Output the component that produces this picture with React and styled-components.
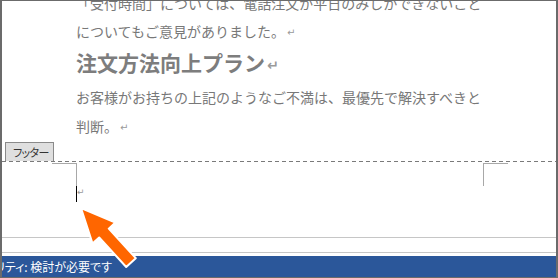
import React from 'react';
import styled, { createGlobalStyle } from 'styled-components';

const GlobalStyle = createGlobalStyle`
  html, body {
    margin: 0;
    padding: 0;
    background: #fff;
  }
  body {
    font-family: "Noto Sans CJK JP", "Noto Sans", sans-serif;
  }
`;

const Window = styled.div`
  position: relative;
  width: 558px;
  height: 278px;
  box-sizing: border-box;
  border-style: solid;
  border-color: #6b6b6b;
  border-width: 1px 2px 1px 2px;
  display: flex;
  flex-direction: column;
  overflow: hidden;
  background: #fff;
`;

const Document = styled.div`
  flex: 1;
  display: flex;
  flex-direction: column;
  overflow: hidden;
`;

const Body = styled.div`
  margin-top: -12px;
  padding-left: 74px;
  color: #787878;
  white-space: nowrap;
`;

const Line = styled.div`
  height: ${p => p.$lh || 28}px;
  font-size: 14px;
  line-height: ${p => p.$lh || 28}px;
  margin-top: ${p => p.$mt || 0}px;
`;

const Heading = styled.div`
  height: 34px;
  font-size: 21px;
  font-weight: 700;
  line-height: 34px;
  color: #7d7d7d;
`;

const Mark = styled.span`
  display: inline-block;
  font-family: "DejaVu Sans", sans-serif;
  font-size: ${p => p.$size || 10}px;
  line-height: 0;
  color: #9a9a9a;
  margin-left: ${p => p.$ml || 2}px;
  vertical-align: middle;
`;

const TabRow = styled.div`
  margin-top: 1px;
  padding-left: 3px;
  display: flex;
`;

const FooterTab = styled.div`
  width: 49px;
  height: 19px;
  box-sizing: border-box;
  border: 1px solid #8a8a8a;
  border-bottom: none;
  background: #dfdfdf;
  color: #333;
  font-size: 11px;
  letter-spacing: -0.6px;
  font-feature-settings: "palt";
  line-height: 18px;
  padding-left: 7px;
  white-space: nowrap;
  overflow: hidden;
`;

const Dashed = styled.div`
  height: 1px;
  flex-shrink: 0;
  background: repeating-linear-gradient(to right, #7a7a7a 0 4px, transparent 4px 7px);
`;

const MarkRow = styled.div`
  margin-top: 1px;
  padding: 0 48px 0 50px;
  display: flex;
  justify-content: space-between;
`;

const Corner = styled.div`
  width: 24px;
  height: 22px;
  border-top: 1px solid #a8a8a8;
  ${p => (p.$side === 'left' ? 'border-right' : 'border-left')}: 1px solid #a8a8a8;
`;

const CursorRow = styled.div`
  padding-left: 74px;
  display: flex;
  align-items: flex-start;
  height: 16px;
`;

const Caret = styled.div`
  width: 1px;
  height: 16px;
  background: #000;
`;

const CaretMark = styled.span`
  font-family: "DejaVu Sans", sans-serif;
  font-size: 9px;
  line-height: 10px;
  color: #9a9a9a;
  margin-top: 1px;
`;

const Rules = styled.div`
  height: 16px;
  flex-shrink: 0;
  box-sizing: border-box;
  border-top: 1px solid #c6c6c6;
  border-bottom: 1px solid #c6c6c6;
  margin-bottom: 3px;
`;

const StatusBar = styled.div`
  height: 21px;
  flex-shrink: 0;
  background: #2b579a;
  color: #fff;
  font-size: 12px;
  line-height: 21px;
  font-feature-settings: "palt";
  white-space: nowrap;
  overflow: hidden;
`;

const StatusText = styled.span`
  display: inline-block;
  margin-left: -7px;
`;

const Overlay = styled.svg`
  position: absolute;
  left: -2px;
  top: -1px;
  pointer-events: none;
`;

function Arrow() {
  return (
    <Overlay width="558" height="278" viewBox="0 0 558 278">
      <g transform="translate(81 208) rotate(47.5)">
        <polygon
          points="0,0 34,-15.5 34,-6.5 74,-6.5 74,6.5 34,6.5 34,15.5"
          fill="#ff6600"
          stroke="#fff"
          strokeWidth="2"
          strokeLinejoin="round"
        />
      </g>
    </Overlay>
  );
}

export default function App() {
  return (
    <>
      <GlobalStyle />
      <Window>
        <Document>
          <Body>
            <Line>「受付時間」については、電話注文が平日のみしかできないこと</Line>
            <Line>についてもご意見がありました。<Mark>↵</Mark></Line>
            <Heading>注文方法向上プラン<Mark $size={14} $ml={0}>↵</Mark></Heading>
            <Line $lh={29} $mt={4}>お客様がお持ちの上記のようなご不満は、最優先で解決すべきと</Line>
            <Line $lh={29}>判断。<Mark>↵</Mark></Line>
          </Body>
          <TabRow>
            <FooterTab>フッター</FooterTab>
          </TabRow>
          <Dashed />
          <MarkRow>
            <Corner $side="left" />
            <Corner $side="right" />
          </MarkRow>
          <CursorRow>
            <Caret />
            <CaretMark>↵</CaretMark>
          </CursorRow>
        </Document>
        <Rules />
        <StatusBar>
          <StatusText>リティ: 検討が必要です</StatusText>
        </StatusBar>
        <Arrow />
      </Window>
    </>
  );
}
